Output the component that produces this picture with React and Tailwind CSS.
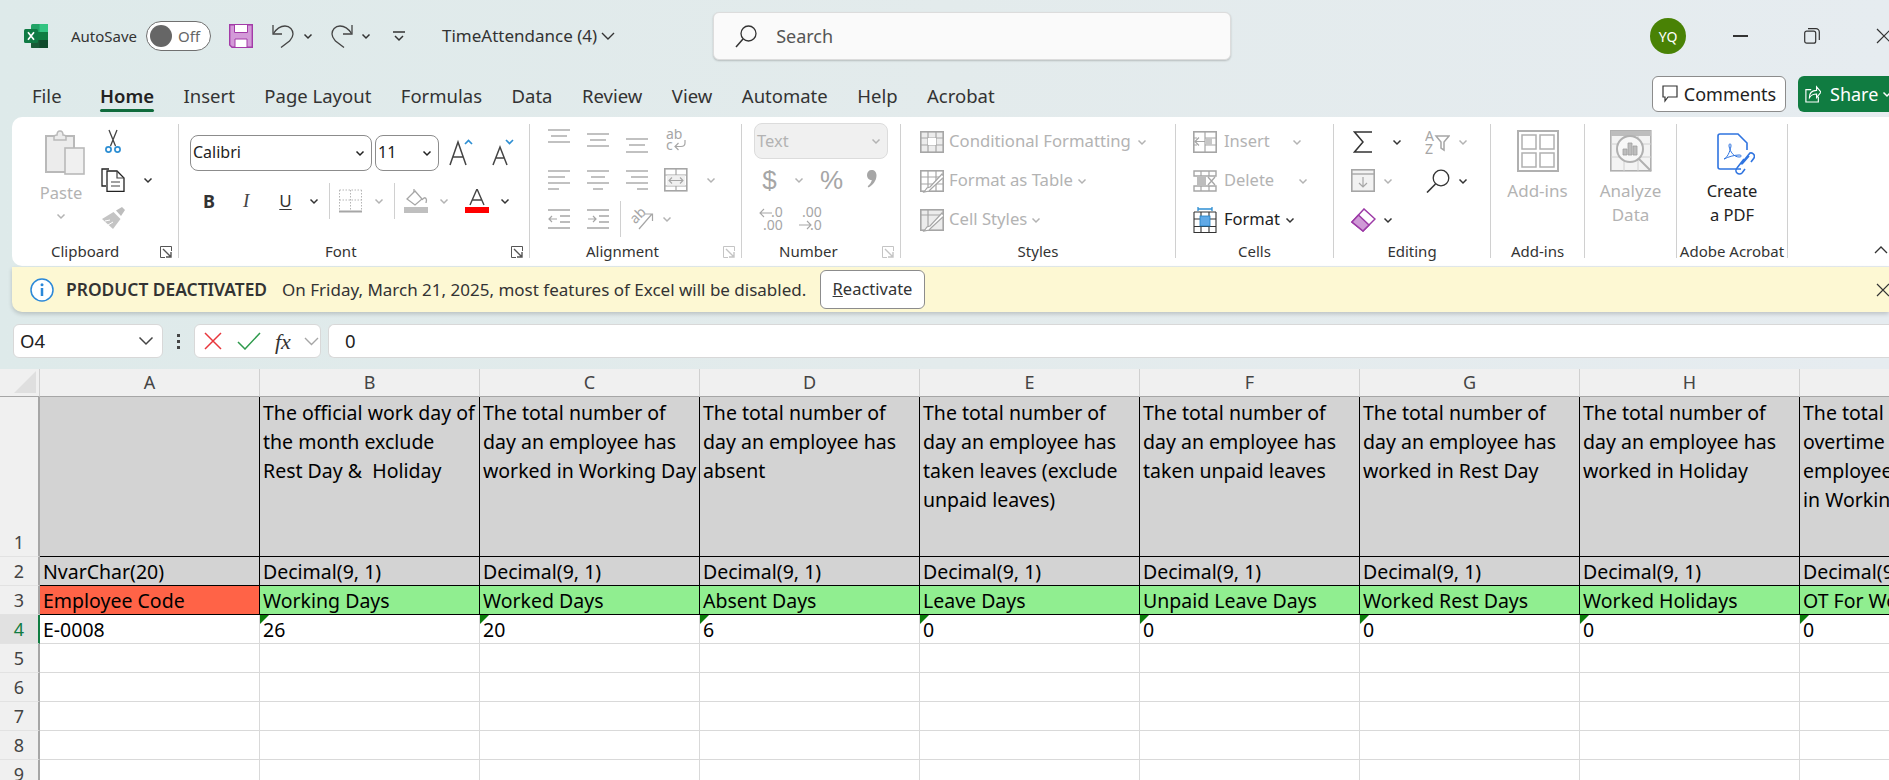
import React from "react";

const GRAY = "#b3b3b3";
const DARK = "#333333";
const ICON_FONT = "'Noto Sans', sans-serif";

const Svg = ({ w = 24, h = 24, children, className = "" }) => (
  <svg width={w} height={h} viewBox={`0 0 ${w} ${h}`} fill="none" className={`shrink-0 ${className}`}>
    {children}
  </svg>
);

const Chev = ({ color = DARK, className = "", w = 12 }) => (
  <svg width={w} height="12" viewBox="0 0 12 12" fill="none" className={`shrink-0 ${className}`}>
    <path d="M2.5 4.5 6 8l3.5-3.5" stroke={color} strokeWidth="1.5" />
  </svg>
);

const Launcher = ({ color = "#555555" }) => (
  <Svg w={12} h={12}>
    <path d="M11.5 5V.5H.5v11H5" stroke={color} strokeWidth="1" />
    <path d="M3 3l7.5 7.5M11 6v5H6" stroke={color} strokeWidth="1.4" />
  </Svg>
);

const ExcelLogo = () => (
  <Svg>
    <rect x="7" y="0" width="17" height="24" rx="1.5" fill="#21a366" />
    <rect x="15.5" y="0" width="8.5" height="8" fill="#33c481" />
    <rect x="7" y="8" width="17" height="8" fill="#107c41" />
    <rect x="7" y="16" width="17" height="8" rx="1" fill="#185c37" />
    <rect x="15.5" y="16" width="8.5" height="8" fill="#0f4a2c" />
    <rect x="0" y="5" width="14" height="14" rx="1.5" fill="#0f7a44" />
    <path d="M4 8.3 10 15.7M10 8.3 4 15.7" stroke="#ffffff" strokeWidth="1.7" />
  </Svg>
);

const SaveIcon = () => (
  <Svg>
    <path d="M.7.7h22.6v22.6H3L.7 21z" fill="#d39ad8" stroke="#a33ba8" strokeWidth="1.4" />
    <rect x="5.5" y="1" width="13" height="7.5" fill="#ffffff" />
    <rect x="6" y="15" width="12" height="8" fill="#ffffff" />
    <path d="M5.5 1v7.5h13V1M6 23v-8h12v8" stroke="#a33ba8" strokeWidth="1" />
  </Svg>
);

const UndoIcon = () => (
  <Svg h={24}>
    <path d="M1 1v9h9" stroke="#444444" strokeWidth="1.3" />
    <path d="M1.5 9.5C5 4 9 2 13 2c5 0 8 4 8 8 0 3-2 5-3.5 7L9 23.5" stroke="#444444" strokeWidth="1.3" />
  </Svg>
);

const RedoIcon = () => (
  <Svg h={24}>
    <path d="M22 1v9h-9" stroke="#444444" strokeWidth="1.3" />
    <path d="M21.5 9.5C18 4 14 2 10 2 5 2 2 6 2 10c0 3 2 5 3.5 7l8.5 6.5" stroke="#444444" strokeWidth="1.3" />
  </Svg>
);

const LinesIcon = ({ rows, color = "#a6a6a6" }) => (
  <Svg w={22} h={24}>
    {rows.map(([x1, x2, y], i) => (
      <path key={i} d={`M${x1} ${y}H${x2}`} stroke={color} strokeWidth="1.4" />
    ))}
  </Svg>
);

const WrapIcon = () => (
  <Svg w={22} h={24}>
    <text x="1" y="10" fontSize="14" fill="#a6a6a6" fontFamily={ICON_FONT}>ab</text>
    <text x="1" y="21" fontSize="14" fill="#a6a6a6" fontFamily={ICON_FONT}>c</text>
    <path d="M20 11v3c0 3-2 3.5-4 3.5H10M13.5 14l-3.5 3.5 3.5 3.5" stroke="#a6a6a6" strokeWidth="1.2" />
  </Svg>
);

const MergeIcon = () => (
  <Svg>
    <rect x=".8" y=".8" width="22" height="22" fill="#ffffff" stroke="#a6a6a6" strokeWidth="1.6" />
    <path d="M1 7h22M1 18h22M12 1v6M12 18v5" stroke="#a6a6a6" strokeWidth="1.2" />
    <path d="M3 7.5h18v10H3z" fill="#f0f0f0" />
    <path d="M5 12.5h14M8 9.5l-3 3 3 3M16 9.5l3 3-3 3" stroke="#a6a6a6" strokeWidth="1.1" />
  </Svg>
);

const IndentIcon = ({ flip }) => (
  <Svg w={22} h={24}>
    <path d="M0 3h22M0 21h22M12 9h10M12 15h10" stroke="#a6a6a6" strokeWidth="1.4" />
    {flip ? (
      <path d="M1 12h8M6 9l3 3-3 3" stroke="#a6a6a6" strokeWidth="1.2" />
    ) : (
      <path d="M1 12h8M4 9l-3 3 3 3" stroke="#a6a6a6" strokeWidth="1.2" />
    )}
  </Svg>
);

const OrientIcon = () => (
  <Svg>
    <text x="0" y="13" fontSize="14" fill="#a6a6a6" transform="rotate(-45 8 9)" fontFamily={ICON_FONT}>ab</text>
    <path d="M9 22 22 7M15 7h7.5v7" stroke="#a6a6a6" strokeWidth="1.2" />
  </Svg>
);

const PasteIcon = () => (
  <Svg w={40} h={45}>
    <path d="M1 6h28v36H1z" fill="#ececec" stroke="#b9b9b9" strokeWidth="2" />
    <path d="M9 7c0-1 1-2 3-2 0-3 1.5-4 3-4s3 1 3 4c2 0 3 1 3 2v3H9z" fill="#ececec" stroke="#b9b9b9" strokeWidth="1.5" />
    <rect x="20" y="18" width="19" height="26" fill="#f0f0f0" stroke="#b9b9b9" strokeWidth="1.6" />
  </Svg>
);

const ScissorsIcon = () => (
  <Svg h={24}>
    <path d="M8 1l6.5 16M16 1 9.5 17" stroke="#444444" strokeWidth="1.3" />
    <circle cx="7.5" cy="20.5" r="2.6" stroke="#2e8fd3" strokeWidth="1.7" />
    <circle cx="16.5" cy="20.5" r="2.6" stroke="#2e8fd3" strokeWidth="1.7" />
  </Svg>
);

const CopyIcon = () => (
  <Svg>
    <path d="M8 1H1v17h4" stroke="#222222" strokeWidth="1.3" />
    <path d="M6 3h10l7 7v13.3H6z" fill="#ffffff" stroke="#222222" strokeWidth="1.3" />
    <path d="M16 3v7h7M10 14h9M10 18h9" stroke="#444444" strokeWidth="1.2" />
  </Svg>
);

const BrushIcon = () => (
  <Svg h={22}>
    <path d="M15 3.5 21 0l3 3-4 6z" fill="#bdbdbd" />
    <path d="M1 12 12.5 5l7 7L12 22z" fill="#c4c4c4" />
    <path d="M4 14l5-1M7 18l5-3" stroke="#ffffff" strokeWidth="1" />
  </Svg>
);

const GrowIcon = ({ up }) => (
  <Svg h={30}>
    {up ? (
      <>
        <path d="M1 27 9 4l8 23M4 19h10" stroke="#444444" strokeWidth="1.5" />
        <path d="M16 6l3.5-3.5L23 6" stroke="#2e8fd3" strokeWidth="1.7" />
      </>
    ) : (
      <>
        <path d="M2 27 9 9l7 18M5 20h8" stroke="#444444" strokeWidth="1.5" />
        <path d="M15 2l3.5 3.5L22 2" stroke="#2e8fd3" strokeWidth="1.7" />
      </>
    )}
  </Svg>
);

const BorderIcon = () => (
  <Svg w={23} h={24}>
    <path d="M.5 1h22M.5 1v20M22.5 1v20M11.5 1v20M.5 11h22" stroke="#b5b5b5" strokeWidth="1" strokeDasharray="1.5 1.5" />
    <path d="M0 22.5h23" stroke="#a6a6a6" strokeWidth="2" />
  </Svg>
);

const FillIcon = () => (
  <Svg h={24}>
    <path d="M3 10 11 2l7 8-7 6z" fill="#ffffff" stroke="#a6a6a6" strokeWidth="1.3" />
    <path d="M10 3V0M18 11c2-3 4-3 4.5 0l-.5 3" stroke="#a6a6a6" strokeWidth="1.3" />
    <rect x="0" y="18" width="24" height="6" fill="#bfbfbf" />
  </Svg>
);

const FontColorIcon = () => (
  <Svg h={24}>
    <path d="M5 16 12 0l7 16M7.5 11h9" stroke="#444444" strokeWidth="1.4" />
    <rect x="0" y="18" width="24" height="6" fill="#ff0000" />
  </Svg>
);

const DecimalIcon = ({ more }) => (
  <Svg h={24}>
    {more ? (
      <>
        <text x="4" y="10" fontSize="14" fill="#a6a6a6" fontFamily={ICON_FONT}>.00</text>
        <text x="12" y="23" fontSize="14" fill="#a6a6a6" fontFamily={ICON_FONT}>.0</text>
        <path d="M1 18h12M9 14l4 4-4 4" stroke="#a6a6a6" strokeWidth="1.1" />
      </>
    ) : (
      <>
        <text x="12" y="10" fontSize="14" fill="#a6a6a6" fontFamily={ICON_FONT}>.0</text>
        <text x="4" y="23" fontSize="14" fill="#a6a6a6" fontFamily={ICON_FONT}>.00</text>
        <path d="M13 6H1M5 2 1 6l4 4" stroke="#a6a6a6" strokeWidth="1.1" />
      </>
    )}
  </Svg>
);

const CommaIcon = () => (
  <Svg w={11} h={24}>
    <path d="M5.5 2C8.5 2 10.5 4 10.5 7.5c0 5-3.5 9.5-8 12l-.8-1.2C4 16.5 5.5 14 5.8 12 3 12 1 10 1 7s2-5 4.5-5z" fill="#a6a6a6" />
  </Svg>
);

const CondFmtIcon = () => (
  <Svg>
    <rect x=".8" y="1.8" width="22.4" height="20.4" fill="#ececec" stroke="#a6a6a6" strokeWidth="1.6" />
    <path d="M1 8h22M1 15h22M8 2v20M16 2v20" stroke="#a6a6a6" strokeWidth="1.2" />
    <rect x="8" y="8" width="8" height="7" fill="#ffffff" />
  </Svg>
);

const TableBrushIcon = ({ filled }) => (
  <Svg>
    <rect x=".8" y="1.8" width="22.4" height="20.4" fill={filled ? "#ececec" : "#ffffff"} stroke="#a6a6a6" strokeWidth="1.6" />
    <path d={filled ? "M1 7h22M8 2v20" : "M1 8h22M1 15h22M8 2v20M16 2v20"} stroke="#a6a6a6" strokeWidth="1.2" />
    <path d="M22 5 10 18l-3 1-3 4 5-1 3-3L24 8z" fill="#ffffff" stroke="#a6a6a6" strokeWidth="1.2" />
  </Svg>
);

const InsertCellsIcon = () => (
  <Svg>
    <rect x=".8" y="1.8" width="22.4" height="20.4" fill="#ffffff" stroke="#a6a6a6" strokeWidth="1.6" />
    <path d="M12 2v20M12 8h11M12 15h11M1 8h3M1 15h3" stroke="#a6a6a6" strokeWidth="1.2" />
    <rect x="13" y="8" width="6" height="7" fill="#c7c7c7" />
    <path d="M2 11.5h10M6 7.5l-4 4 4 4" stroke="#a6a6a6" strokeWidth="1.2" />
  </Svg>
);

const DeleteCellsIcon = () => (
  <Svg>
    <path d="M1 2h22v5H1zM1 17h22v5H1z" fill="#ffffff" stroke="#a6a6a6" strokeWidth="1.4" />
    <path d="M8 2v5M16 2v5M8 17v5M16 17v5" stroke="#a6a6a6" strokeWidth="1.2" />
    <rect x="4" y="7" width="9" height="10" fill="#bdbdbd" />
    <path d="M15 8l7 8M22 8l-7 8" stroke="#a6a6a6" strokeWidth="1.3" />
  </Svg>
);

const FormatCellsIcon = () => (
  <Svg h={26}>
    <path d="M1 5h22M1 5v21M23 5v21M1 19.5h22M1 12h22M8 5v21M16 5v21M1 25.5h22" stroke="#333333" strokeWidth="1.1" />
    <rect x="7" y="9" width="10" height="10" fill="#60a9e6" stroke="#1f7fc4" strokeWidth=".8" />
    <path d="M5 2h14M5 0v4M19 0v4" stroke="#2e8fd3" strokeWidth="1.3" />
  </Svg>
);

const SigmaIcon = () => (
  <Svg w={20} h={22}>
    <path d="M19 1H1.5L10 11 1.5 21H19" stroke="#333333" strokeWidth="1.5" />
  </Svg>
);

const SortIcon = () => (
  <Svg w={25} h={24}>
    <text x="0" y="11" fontSize="14" fill="#a6a6a6" fontFamily={ICON_FONT}>A</text>
    <text x="0" y="24" fontSize="14" fill="#a6a6a6" fontFamily={ICON_FONT}>Z</text>
    <path d="M11 6h13l-5 6v8l-3-2v-6z" fill="#ffffff" stroke="#a6a6a6" strokeWidth="1.5" />
  </Svg>
);

const FillDownIcon = () => (
  <Svg>
    <rect x=".8" y=".8" width="22.4" height="21.4" fill="#f2f2f2" stroke="#a6a6a6" strokeWidth="1.6" />
    <path d="M1 5h22" stroke="#a6a6a6" strokeWidth="1.4" />
    <path d="M12 8v10M8 14l4 4 4-4" stroke="#a6a6a6" strokeWidth="1.2" />
  </Svg>
);

const FindIcon = () => (
  <Svg>
    <circle cx="15" cy="9" r="7.8" stroke="#333333" strokeWidth="1.3" />
    <path d="M9.5 15 1 23.5" stroke="#333333" strokeWidth="1.6" />
  </Svg>
);

const ClearIcon = () => (
  <Svg w={25} h={24}>
    <path d="M1 14 13 1l11 10-12 12z" fill="#ffffff" stroke="#9c3aa6" strokeWidth="1.5" />
    <path d="M1 14l6.5-7L18 17l-6 6z" fill="#cf9ad6" stroke="#9c3aa6" strokeWidth="1.5" />
  </Svg>
);

const AddinsIcon = () => (
  <Svg w={42} h={42}>
    <rect x="1" y="1" width="40" height="40" stroke="#b0b0b0" strokeWidth="2" />
    <rect x="5" y="5" width="14" height="14" stroke="#b0b0b0" strokeWidth="1.5" />
    <rect x="23" y="5" width="14" height="14" stroke="#b0b0b0" strokeWidth="1.5" />
    <rect x="5" y="23" width="14" height="14" stroke="#b0b0b0" strokeWidth="1.5" />
    <rect x="23" y="23" width="14" height="14" stroke="#b0b0b0" strokeWidth="1.5" />
  </Svg>
);

const AnalyzeIcon = () => (
  <Svg w={42} h={42}>
    <rect x=".8" y=".8" width="40" height="40" fill="#f3f3f3" stroke="#b0b0b0" strokeWidth="1.6" />
    <rect x="1" y="1" width="40" height="5" fill="#bdbdbd" />
    <path d="M1 14h40M1 27h40M14 6v35M28 6v35" stroke="#d0d0d0" strokeWidth="1" />
    <circle cx="20" cy="19" r="13" fill="#f7f7f7" stroke="#b0b0b0" strokeWidth="2" />
    <path d="M13 25V19h4v6zM18 25V13h4v12zM23 25V16h4v9z" fill="#bdbdbd" stroke="#9f9f9f" strokeWidth=".8" />
    <path d="M29 29 41 41" stroke="#b0b0b0" strokeWidth="2" />
  </Svg>
);

const PdfIcon = () => (
  <Svg w={38} h={42}>
    <path d="M24 36H3a2 2 0 0 1-2-2V3a2 2 0 0 1 2-2h18l9 9v7" stroke="#2f74e0" strokeWidth="1.6" />
    <path d="M7 26c3-1 6-7 7-13 0-3-2-3-2 0 1 6 5 11 10 11 3 0 3-2 0-2-5 0-11 2-15 4z" stroke="#2f74e0" strokeWidth="1" />
    <path d="M24 31l9-11a3.5 3.5 0 0 1 4 5l-3 4M27 26l-7 9a3.5 3.5 0 0 0 5 5l3-4M25 31l7-8" stroke="#2f74e0" strokeWidth="1.6" />
  </Svg>
);

const Select = ({ w, text }) => (
  <div className={`flex h-[36px] items-center justify-between rounded-[8px] border border-[#8c8c8c] pl-[2px] pr-[5px] text-[16px] text-[#222222] ${w}`}>
    <span className="-mt-[2px]">{text}</span>
    <Chev color="#222222" />
  </div>
);

const Group = ({ w, label, pad = "justify-center", launcher, launcherColor, children }) => (
  <div className={`flex h-[134px] shrink-0 flex-col border-r border-[#d0d0d0] ${w}`}>
    <div className="min-h-0 flex-1">{children}</div>
    <div className={`-mb-[4px] flex h-[20px] shrink-0 items-center text-[15px] leading-[20px] text-[#333333] ${pad}`}>
      {label && <span className="-mt-[2px] whitespace-nowrap">{label}</span>}
      {launcher && (
        <span className="ml-auto mr-[6px]">
          <Launcher color={launcherColor} />
        </span>
      )}
    </div>
  </div>
);

const tabs = ["Home", "Insert", "Page Layout", "Formulas", "Data", "Review", "View", "Automate", "Help", "Acrobat"];

const TopBar = () => (
  <div className="flex h-[72px] shrink-0 items-center pl-[24px] text-[#333333]">
    <ExcelLogo />
    <span className="ml-[23px] w-[66px] text-[15px]">AutoSave</span>
    <div className="ml-[9px] flex h-[30px] w-[65px] shrink-0 items-center rounded-full border border-[#707070] bg-white pl-[3px]">
      <span className="h-[22px] w-[22px] rounded-full bg-[#666666]" />
      <span className="ml-[6px] text-[15px] text-[#666666]">Off</span>
    </div>
    <span className="ml-[18px]"><SaveIcon /></span>
    <span className="ml-[19px]"><UndoIcon /></span>
    <Chev className="ml-[6px]" />
    <span className="ml-[16px]"><RedoIcon /></span>
    <Chev className="ml-[6px]" />
    <svg width="12" height="12" viewBox="0 0 12 12" fill="none" className="ml-[21px] shrink-0">
      <path d="M0 2h12" stroke="#333333" strokeWidth="1.5" />
      <path d="M2 6l4 4 4-4" stroke="#333333" strokeWidth="1.5" />
    </svg>
    <span className="ml-[37px] w-[157px] whitespace-nowrap text-[17px]">TimeAttendance (4)</span>
    <svg width="14" height="9" viewBox="0 0 14 9" fill="none" className="ml-[4px] shrink-0">
      <path d="M1 1l6 6 6-6" stroke="#333333" strokeWidth="1.4" />
    </svg>
    <div className="ml-[98px] flex h-[48px] w-[518px] shrink-0 items-center rounded-[6px] border border-[#dcdcdc] bg-[#fafafa] pl-[21px] shadow-[0_1px_2px_rgba(0,0,0,0.2)]">
      <svg width="22" height="23" viewBox="0 0 22 23" fill="none" className="shrink-0">
        <circle cx="13.5" cy="8.5" r="7.5" stroke="#333333" strokeWidth="1.3" />
        <path d="M8 14 1 22" stroke="#333333" strokeWidth="1.5" />
      </svg>
      <span className="ml-[19px] text-[18px] text-[#555555]">Search</span>
    </div>
    <div className="ml-[419px] flex h-[36px] w-[36px] shrink-0 items-center justify-center rounded-full bg-[#498205] text-[14px] text-white">YQ</div>
    <span className="ml-[47px] h-[1.5px] w-[15px] shrink-0 bg-[#333333]" />
    <svg width="16" height="16" viewBox="0 0 16 16" fill="none" className="ml-[56px] shrink-0">
      <rect x=".7" y="3.2" width="11" height="12" rx="2" stroke="#333333" strokeWidth="1.2" />
      <path d="M4 .7h8a3.3 3.3 0 0 1 3.3 3.3v8" stroke="#333333" strokeWidth="1.2" />
    </svg>
    <svg width="16" height="16" viewBox="0 0 16 16" fill="none" className="ml-[56px] shrink-0">
      <path d="M1 1l14 14M15 1 1 15" stroke="#333333" strokeWidth="1.2" />
    </svg>
  </div>
);

const TabBar = () => (
  <div className="relative flex h-[45px] shrink-0 items-start pl-[32px]">
    <div className="mt-[12px] flex items-start text-[18.5px] leading-[24px] text-[#333333]">
      <div className="w-[68px]">File</div>
      <div className="flex items-start gap-[29.5px]">
        {tabs.map((t) => (
          <div key={t} className={t === "Home" ? "relative font-semibold text-[#222222]" : ""}>
            {t}
            {t === "Home" && <span className="absolute -bottom-[4px] left-0 h-[3px] w-full rounded-sm bg-[#0f6b3c]" />}
          </div>
        ))}
      </div>
    </div>
    <div className="ml-auto mt-[4px] flex">
      <div className="flex h-[36px] w-[134px] items-center justify-center gap-[6px] rounded-[6px] border border-[#8c8c8c] bg-white text-[18px] text-[#222222]">
        <svg width="16" height="18" viewBox="0 0 16 18" fill="none">
          <path d="M1 1h14v11H6l-3 4v-4H1z" stroke="#333333" strokeWidth="1.2" />
        </svg>
        Comments
      </div>
      <div className="ml-[12px] flex h-[36px] w-[91px] items-center overflow-hidden rounded-l-[6px] bg-[#107c41] pl-[7px] text-[18px] text-white">
        <svg width="16" height="18" viewBox="0 0 18 20" fill="none" className="shrink-0">
          <path d="M7 5H1v14h14v-6M5 14c0-5 3-8 8-8V2l5 6-5 6V10c-4 0-6 1-8 4z" stroke="#ffffff" strokeWidth="1.3" />
        </svg>
        <span className="ml-[9px]">Share</span>
        <Chev color="#ffffff" className="ml-[3px]" />
      </div>
    </div>
  </div>
);

const Ribbon = () => (
  <div className="ml-[12px] flex h-[149px] shrink-0 rounded-l-[10px] bg-white pt-[7px] text-[16px]">
    <Group w="w-[167px]" label="Clipboard" pad="pl-[39px]" launcher>
      <div className="flex">
        <div className="ml-[26px] flex w-[46px] flex-col items-center">
          <span className="ml-[7px] mt-[6px] block h-[45px]"><PasteIcon /></span>
          <span className="mt-[8px] text-[16.5px] leading-[20px] text-[#b3b3b3]">Paste</span>
          <Chev color={GRAY} className="mt-[7px]" />
        </div>
        <div className="ml-[17px] flex flex-col">
          <span className="mt-[5px] block h-[24px]"><ScissorsIcon /></span>
          <div className="mt-[15px] flex items-center">
            <CopyIcon />
            <Chev className="ml-[17px]" />
          </div>
          <span className="mt-[15px] block h-[22px]"><BrushIcon /></span>
        </div>
      </div>
    </Group>

    <Group w="w-[351px]" label="Font" pad="pl-[146px]" launcher>
      <div className="ml-[11px] mt-[11px] flex items-center">
        <Select w="w-[182px]" text="Calibri" />
        <span className="ml-[3px]"><Select w="w-[64px]" text="11" /></span>
        <span className="ml-[10px]"><GrowIcon up /></span>
        <span className="ml-[18px]"><GrowIcon /></span>
      </div>
      <div className="mt-[12px] flex h-[36px] items-center">
        <span className="ml-[23px] w-[14px] text-center text-[18px] font-bold text-[#333333]">B</span>
        <span className="ml-[27px] w-[10px] font-['Liberation_Serif',serif] text-[19px] italic text-[#444444]">I</span>
        <span className="ml-[26px] w-[13px] text-center text-[17px] leading-[20px] text-[#333333] underline underline-offset-2">U</span>
        <Chev className="ml-[16px]" />
        <span className="ml-[9px] h-[36px] w-px bg-[#d0d0d0]" />
        <span className="ml-[9px]"><BorderIcon /></span>
        <Chev color={GRAY} className="ml-[11px]" />
        <span className="ml-[9px] h-[36px] w-px bg-[#d0d0d0]" />
        <span className="ml-[9px]"><FillIcon /></span>
        <Chev color={GRAY} className="ml-[10px]" />
        <span className="ml-[15px]"><FontColorIcon /></span>
        <Chev className="ml-[10px]" />
      </div>
    </Group>

    <Group w="w-[212px]" label="Alignment" pad="pl-[56px]" launcher launcherColor="#c4c4c4">
      <div className="ml-[18px] mt-[5px] flex h-[24px] gap-[17px]">
        <LinesIcon rows={[[0, 22, 1], [3, 19, 7], [0, 22, 13]]} />
        <LinesIcon rows={[[0, 22, 5], [3, 19, 11], [0, 22, 17]]} />
        <LinesIcon rows={[[0, 22, 10], [3, 19, 16], [0, 22, 23]]} />
        <WrapIcon />
      </div>
      <div className="ml-[18px] mt-[15px] flex h-[24px] items-center">
        <LinesIcon rows={[[0, 22, 3], [0, 17, 9], [0, 22, 15], [0, 11, 21]]} />
        <span className="ml-[17px]"><LinesIcon rows={[[0, 22, 3], [4, 18, 9], [0, 22, 15], [6, 16, 21]]} /></span>
        <span className="ml-[17px]"><LinesIcon rows={[[0, 22, 3], [5, 22, 9], [0, 22, 15], [11, 22, 21]]} /></span>
        <span className="ml-[16px]"><MergeIcon /></span>
        <Chev color={GRAY} className="ml-[17px]" />
      </div>
      <div className="ml-[18px] mt-[15px] flex h-[24px] items-center">
        <IndentIcon />
        <span className="ml-[17px]"><IndentIcon flip /></span>
        <span className="ml-[11px] h-[36px] w-px shrink-0 bg-[#d0d0d0]" />
        <span className="ml-[9px]"><OrientIcon /></span>
        <Chev color={GRAY} className="ml-[7px]" />
      </div>
    </Group>

    <Group w="w-[159px]" label="Number" pad="pl-[37px]" launcher launcherColor="#c4c4c4">
      <div className="ml-[12px] -mt-[1px] flex h-[36px] w-[134px] items-center justify-between rounded-[8px] border border-[#dcdcdc] bg-[#f0f0f0] pl-[2px] pr-[5px] text-[16.5px] text-[#b3b3b3]">
        <span>Text</span>
        <Chev color={GRAY} />
      </div>
      <div className="mt-[9px] flex h-[24px] items-center text-[#a6a6a6]">
        <span className="ml-[20px] w-[15px] text-center font-['Liberation_Sans',sans-serif] text-[26px] leading-[24px]">$</span>
        <Chev color={GRAY} className="ml-[16px]" />
        <span className="ml-[13px] w-[27px] text-center font-['Liberation_Sans',sans-serif] text-[26px] leading-[24px]">%</span>
        <span className="ml-[21px]"><CommaIcon /></span>
      </div>
      <div className="ml-[17px] mt-[15px] flex h-[24px] gap-[15px]">
        <DecimalIcon />
        <DecimalIcon more />
      </div>
    </Group>

    <Group w="w-[275px]" label="Styles">
      <div className="ml-[19px] mt-[6px] flex flex-col gap-[15px] text-[16.7px] leading-[24px] text-[#b3b3b3]">
        <div className="flex h-[24px] items-center">
          <CondFmtIcon />
          <span className="-mt-[2px] ml-[5px] whitespace-nowrap">Conditional Formatting</span>
          <Chev color={GRAY} className="ml-[5px]" />
        </div>
        <div className="flex h-[24px] items-center">
          <TableBrushIcon />
          <span className="-mt-[2px] ml-[5px] whitespace-nowrap">Format as Table</span>
          <Chev color={GRAY} className="ml-[3px]" />
        </div>
        <div className="flex h-[24px] items-center">
          <TableBrushIcon filled />
          <span className="-mt-[2px] ml-[5px] whitespace-nowrap">Cell Styles</span>
          <Chev color={GRAY} className="ml-[3px]" />
        </div>
      </div>
    </Group>

    <Group w="w-[158px]" label="Cells">
      <div className="ml-[17px] mt-[6px] flex flex-col gap-[15px] text-[16.5px] leading-[24px] text-[#b3b3b3]">
        <div className="flex h-[24px] items-center">
          <InsertCellsIcon />
          <span className="-mt-[2px] ml-[7px] w-[67px]">Insert</span>
          <Chev color={GRAY} />
        </div>
        <div className="flex h-[24px] items-center">
          <DeleteCellsIcon />
          <span className="-mt-[2px] ml-[7px] w-[73px]">Delete</span>
          <Chev color={GRAY} />
        </div>
        <div className="flex h-[24px] items-center text-[#222222]">
          <FormatCellsIcon />
          <span className="-mt-[2px] ml-[7px] w-[60px]">Format</span>
          <Chev />
        </div>
      </div>
    </Group>

    <Group w="w-[157px]" label="Editing">
      <div className="mt-[6px] flex h-[24px] items-center">
        <span className="ml-[19px]"><SigmaIcon /></span>
        <Chev className="ml-[18px]" />
        <span className="ml-[22px]"><SortIcon /></span>
        <Chev color={GRAY} className="ml-[7px]" />
      </div>
      <div className="mt-[15px] flex h-[24px] items-center">
        <span className="ml-[17px]"><FillDownIcon /></span>
        <Chev color={GRAY} className="ml-[7px]" />
        <span className="ml-[32px]"><FindIcon /></span>
        <Chev className="ml-[7px]" />
      </div>
      <div className="mt-[15px] flex h-[24px] items-center">
        <span className="ml-[17px]"><ClearIcon /></span>
        <Chev className="ml-[6px]" />
      </div>
    </Group>

    <Group w="w-[94px]" label="Add-ins">
      <div className="flex flex-col items-center text-[17px] leading-[24px] text-[#b3b3b3]">
        <span className="mt-[6px] block h-[42px]"><AddinsIcon /></span>
        <span className="mt-[7px]">Add-ins</span>
      </div>
    </Group>

    <Group w="w-[92px]">
      <div className="flex flex-col items-center text-center text-[17px] leading-[24px] text-[#b3b3b3]">
        <span className="mt-[6px] block h-[42px]"><AnalyzeIcon /></span>
        <span className="mt-[7px]">Analyze</span>
        <span>Data</span>
      </div>
    </Group>

    <Group w="w-[111px]" label="Adobe Acrobat">
      <div className="flex flex-col items-center text-center text-[16.5px] leading-[24px] text-[#222222]">
        <span className="ml-[8px] mt-[9px] block h-[42px]"><PdfIcon /></span>
        <span className="mt-[4px]">Create</span>
        <span>a PDF</span>
      </div>
    </Group>

    <div className="flex h-[134px] flex-1 flex-col justify-end pb-[3px] pr-[1px]">
      <svg width="14" height="10" viewBox="0 0 14 10" fill="none" className="ml-auto">
        <path d="M1 8l6-6 6 6" stroke="#333333" strokeWidth="1.3" />
      </svg>
    </div>
  </div>
);

const MessageBar = () => (
  <div className="ml-[12px] mt-[1px] flex h-[45px] shrink-0 items-center rounded-bl-[10px] bg-[#fdf8d3] pl-[18px] text-[17px] text-[#333333] shadow-[0_2px_4px_rgba(0,0,0,0.18)]">
    <svg width="24" height="24" viewBox="0 0 24 24" fill="none" className="shrink-0">
      <circle cx="12" cy="12" r="11" fill="#ffffff" stroke="#2b88d8" strokeWidth="1.5" />
      <path d="M12 10v8" stroke="#2b88d8" strokeWidth="2.5" />
      <circle cx="12" cy="6.8" r="1.5" fill="#2b88d8" />
    </svg>
    <span className="ml-[12px] w-[216px] whitespace-nowrap text-[17.4px] font-semibold">PRODUCT DEACTIVATED</span>
    <span className="w-[538px] whitespace-nowrap">On Friday, March 21, 2025, most features of Excel will be disabled.</span>
    <div className="flex h-[39px] w-[105px] items-center justify-center rounded-[6px] border border-[#8c8c8c] bg-white text-[16.5px]">
      <span><span className="underline">R</span>eactivate</span>
    </div>
    <svg width="14" height="14" viewBox="0 0 14 14" fill="none" className="ml-auto mr-[-1px] shrink-0">
      <path d="M1 1l12 12M13 1 1 13" stroke="#333333" strokeWidth="1.2" />
    </svg>
  </div>
);

const FormulaBar = () => (
  <div className="mt-[12px] flex h-[34px] shrink-0 items-stretch pl-[13px] text-[#222222]">
    <div className="flex w-[150px] items-center justify-between rounded-[6px] border border-[#d8d8d8] bg-white pl-[6px] pr-[8px] text-[18.5px]">
      O4
      <svg width="16" height="10" viewBox="0 0 16 10" fill="none">
        <path d="M1.5 1.5 8 8l6.5-6.5" stroke="#444444" strokeWidth="1.5" />
      </svg>
    </div>
    <div className="flex w-[31px] flex-col items-center justify-center gap-[3px]">
      <span className="h-[3px] w-[3px] bg-[#444444]" />
      <span className="h-[3px] w-[3px] bg-[#444444]" />
      <span className="h-[3px] w-[3px] bg-[#444444]" />
    </div>
    <div className="flex w-[127px] items-center rounded-[6px] border border-[#d8d8d8] bg-white pl-[9px]">
      <svg width="18" height="18" viewBox="0 0 18 18" fill="none" className="shrink-0">
        <path d="M1 1l16 16M17 1 1 17" stroke="#e8363c" strokeWidth="1.5" />
      </svg>
      <svg width="24" height="18" viewBox="0 0 24 18" fill="none" className="ml-[15px] shrink-0">
        <path d="M1 10l7 7L23 1" stroke="#2e9a4c" strokeWidth="1.5" />
      </svg>
      <span className="ml-[14px] w-[22px] font-['Liberation_Serif',serif] text-[22px] italic text-[#333333]">fx</span>
      <svg width="15" height="9" viewBox="0 0 15 9" fill="none" className="ml-[7px] shrink-0">
        <path d="M1 1l6.5 6.5L14 1" stroke="#a6a6a6" strokeWidth="1.4" />
      </svg>
    </div>
    <div className="ml-[7px] flex flex-1 items-center rounded-l-[6px] border border-r-0 border-[#d8d8d8] bg-white pl-[16px] text-[18.5px]">0</div>
  </div>
);

const cols = ["A", "B", "C", "D", "E", "F", "G", "H"];

const notes = [
  "",
  "The official work day of\nthe month exclude\nRest Day &  Holiday",
  "The total number of\nday an employee has\nworked in Working Day",
  "The total number of\nday an employee has\nabsent",
  "The total number of\nday an employee has\ntaken leaves (exclude\nunpaid leaves)",
  "The total number of\nday an employee has\ntaken unpaid leaves",
  "The total number of\nday an employee has\nworked in Rest Day",
  "The total number of\nday an employee has\nworked in Holiday",
  "The total number of\novertime hour an\nemployee has worked\nin Working Day",
];

const names = [
  "Employee Code",
  "Working Days",
  "Worked Days",
  "Absent Days",
  "Leave Days",
  "Unpaid Leave Days",
  "Worked Rest Days",
  "Worked Holidays",
  "OT For Working Days",
];

const values = ["E-0008", "26", "20", "6", "0", "0", "0", "0", "0"];

const RowHead = ({ n, active }) => (
  <div className={`flex items-center justify-center border-b border-r-2 border-b-[#e2e2e2] text-[18px] ${active ? "border-r-[#107c41] bg-[#e1e1e1] text-[#107c41]" : "border-r-[#a6a6a6] bg-[#f0f0f0] text-[#444444]"}`}>
    {n}
  </div>
);

const Cell = ({ className = "", children }) => (
  <div className={`relative overflow-hidden whitespace-pre pl-[3px] text-[19.5px] text-black ${className}`}>
    {children}
  </div>
);

const Sheet = () => (
  <div className="mt-[11px] grid shrink-0 grid-cols-[40px_repeat(8,220px)_220px] grid-rows-[28px_160px_repeat(8,29px)] bg-white">
    <div className="flex items-end justify-end border-b border-r border-b-[#a6a6a6] border-r-[#d0d0d0] bg-[#f0f0f0] pb-[3px] pr-[3px]">
      <svg width="22" height="22" viewBox="0 0 22 22"><path d="M22 0v22H0z" fill="#dfdfdf" /></svg>
    </div>
    {cols.map((c) => (
      <div key={c} className="flex items-center justify-center border-b border-r border-b-[#a6a6a6] border-r-[#d0d0d0] bg-[#f0f0f0] text-[18px] text-[#444444]">
        {c}
      </div>
    ))}
    <div className="border-b border-b-[#a6a6a6] bg-[#f0f0f0]" />

    <div className="flex items-end justify-center border-b border-r-2 border-b-[#e2e2e2] border-r-[#a6a6a6] bg-[#f0f0f0] text-[18px] text-[#444444]">1</div>
    {notes.map((t, i) => (
      <Cell key={i} className="border-b border-r border-black bg-[#d3d3d3] pt-[1px] leading-[29px]">{t}</Cell>
    ))}

    <RowHead n={2} />
    {notes.map((_, i) => (
      <Cell key={i} className="border-b border-r border-black bg-[#d3d3d3] leading-[30px]">
        {i === 0 ? "NvarChar(20)" : "Decimal(9, 1)"}
      </Cell>
    ))}

    <RowHead n={3} />
    {names.map((t, i) => (
      <Cell key={i} className={`border-b border-r border-black leading-[30px] ${i === 0 ? "bg-[#ff6347]" : "bg-[#90ee90]"}`}>{t}</Cell>
    ))}

    <RowHead n={4} active />
    {values.map((t, i) => (
      <Cell key={i} className="border-b border-r border-[#d9d9d9] leading-[30px]">
        {i > 0 && <span className="absolute left-0 top-0 h-0 w-0 border-r-[9px] border-t-[9px] border-r-transparent border-t-[#0a7d0a]" />}
        {t}
      </Cell>
    ))}

    {[5, 6, 7, 8, 9].map((n) => (
      <React.Fragment key={n}>
        <RowHead n={n} />
        {values.map((_, i) => (
          <div key={i} className="border-b border-r border-[#d9d9d9]" />
        ))}
      </React.Fragment>
    ))}
  </div>
);

export default function App() {
  return (
    <div className="relative flex h-[780px] w-[1889px] flex-col overflow-hidden bg-[linear-gradient(90deg,#deeaea_0%,#e3ebec_50%,#e6ecf0_100%)] font-['Noto_Sans',sans-serif]">
      <TopBar />
      <TabBar />
      <Ribbon />
      <MessageBar />
      <FormulaBar />
      <Sheet />
    </div>
  );
}
